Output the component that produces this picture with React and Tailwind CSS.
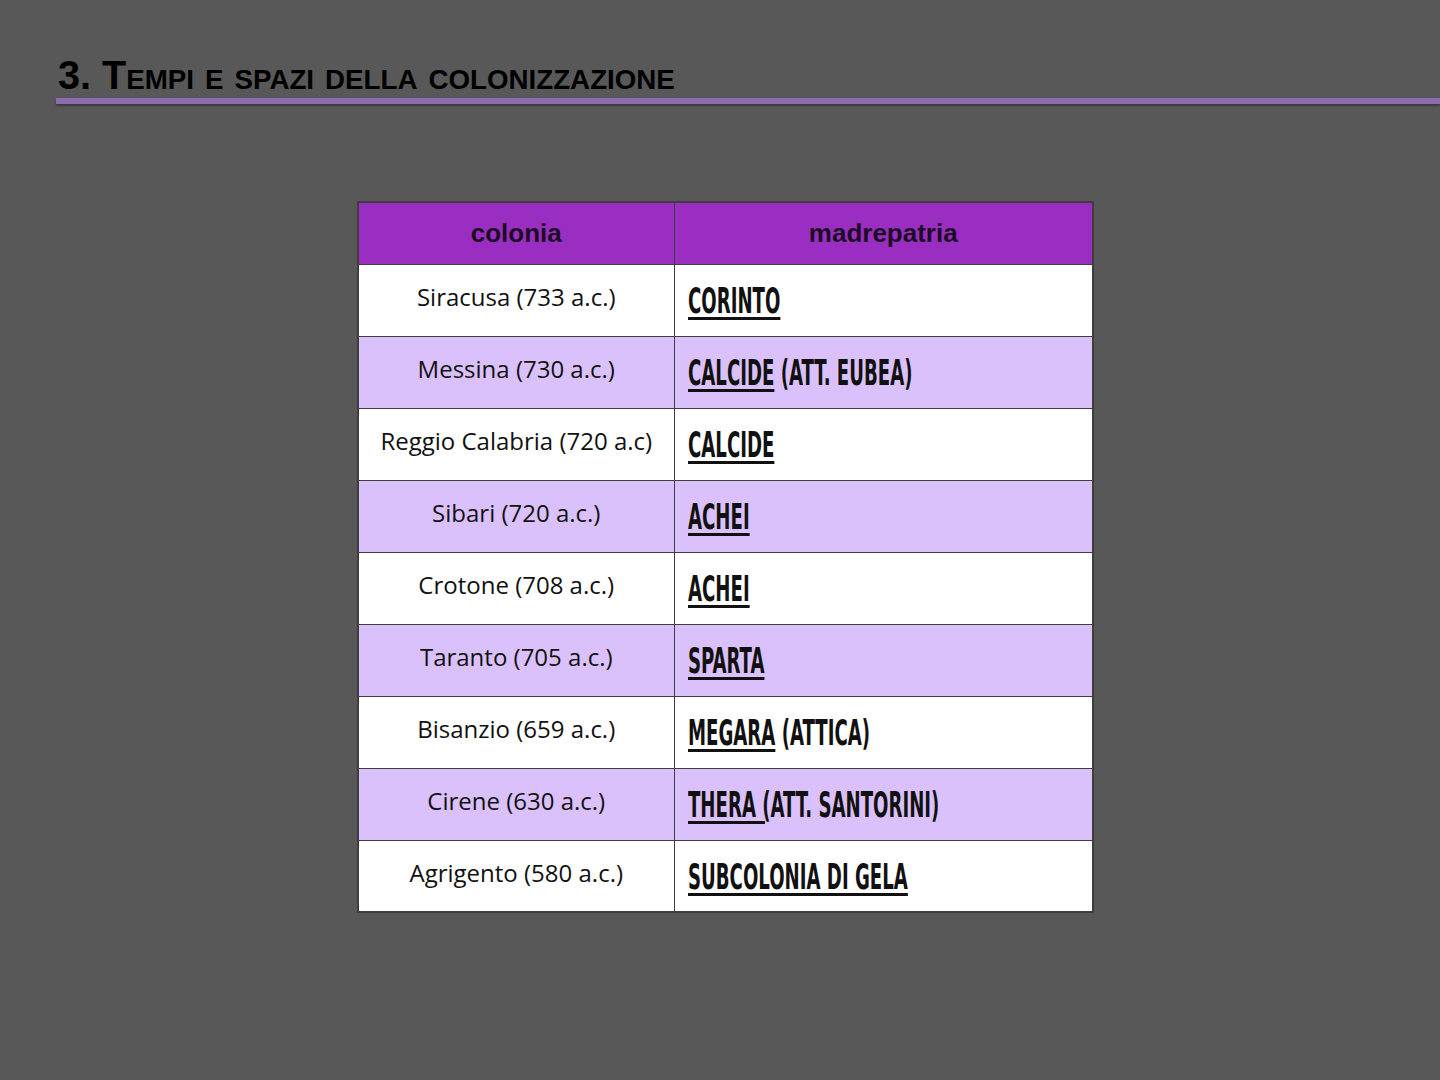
const rows = [
  { colonia: "Siracusa (733 a.c.)", main: "CORINTO", rest: "" },
  { colonia: "Messina (730 a.c.)", main: "CALCIDE", rest: " (ATT. EUBEA)" },
  { colonia: "Reggio Calabria (720 a.c)", main: "CALCIDE", rest: "" },
  { colonia: "Sibari (720 a.c.)", main: "ACHEI", rest: "" },
  { colonia: "Crotone (708 a.c.)", main: "ACHEI", rest: "" },
  { colonia: "Taranto (705 a.c.)", main: "SPARTA", rest: "" },
  { colonia: "Bisanzio (659 a.c.)", main: "MEGARA", rest: " (ATTICA)" },
  { colonia: "Cirene (630 a.c.)", main: "THERA (", rest: "ATT. SANTORINI)" },
  { colonia: "Agrigento (580 a.c.)", main: "SUBCOLONIA DI GELA", rest: "" },
];

const App = () => {
  return (
    <div className="w-[1440px] h-[1080px] bg-[#585858] overflow-hidden flex flex-col">
      <div className="pl-[58px] pt-[55px] h-[98px]">
        <h1 className="inline-block origin-left scale-x-[0.99] whitespace-nowrap text-black font-bold leading-none text-[40px] [font-variant:small-caps] font-['Liberation_Sans',sans-serif]">
          3. Tempi e spazi della colonizzazione
        </h1>
      </div>
      <div className="ml-[56px] h-[6px] bg-[#8e6aae] shadow-[0_2px_2px_rgba(0,0,0,0.35)]" />

      <div className="pl-[357px] pt-[97px]">
        <table className="table-fixed w-[737px] border-collapse border-2 border-[#3e3e3e]">
          <colgroup>
            <col className="w-[316px]" />
            <col />
          </colgroup>
          <thead>
            <tr className="h-[62px] bg-[#9a2ec2]">
              <th className="border border-[#3e3e3e] text-[26px] font-bold text-[#1c0c24] font-['Liberation_Sans',sans-serif]">
                colonia
              </th>
              <th className="border border-[#3e3e3e] text-[26px] font-bold text-[#1c0c24] font-['Liberation_Sans',sans-serif]">
                madrepatria
              </th>
            </tr>
          </thead>
          <tbody>
            {rows.map((r, i) => (
              <tr key={i} className={`h-[72px] ${i % 2 === 1 ? "bg-[#dbc1fb]" : "bg-white"}`}>
                <td className="border border-[#3e3e3e] text-center whitespace-nowrap text-[24px] text-[#111] pb-[6px] font-['Open_Sans',sans-serif]">
                  {r.colonia}
                </td>
                <td className="border border-[#3e3e3e] pl-[13px] pt-[2px]">
                  <span className="inline-block origin-left scale-x-[0.56] whitespace-nowrap text-[36px] leading-[44px] font-bold text-[#111] uppercase font-['DejaVu_Sans_Condensed',sans-serif]">
                    <span className="underline decoration-[3px] underline-offset-[4px]">{r.main}</span>
                    {r.rest}
                  </span>
                </td>
              </tr>
            ))}
          </tbody>
        </table>
      </div>
    </div>
  );
};

export default App;
